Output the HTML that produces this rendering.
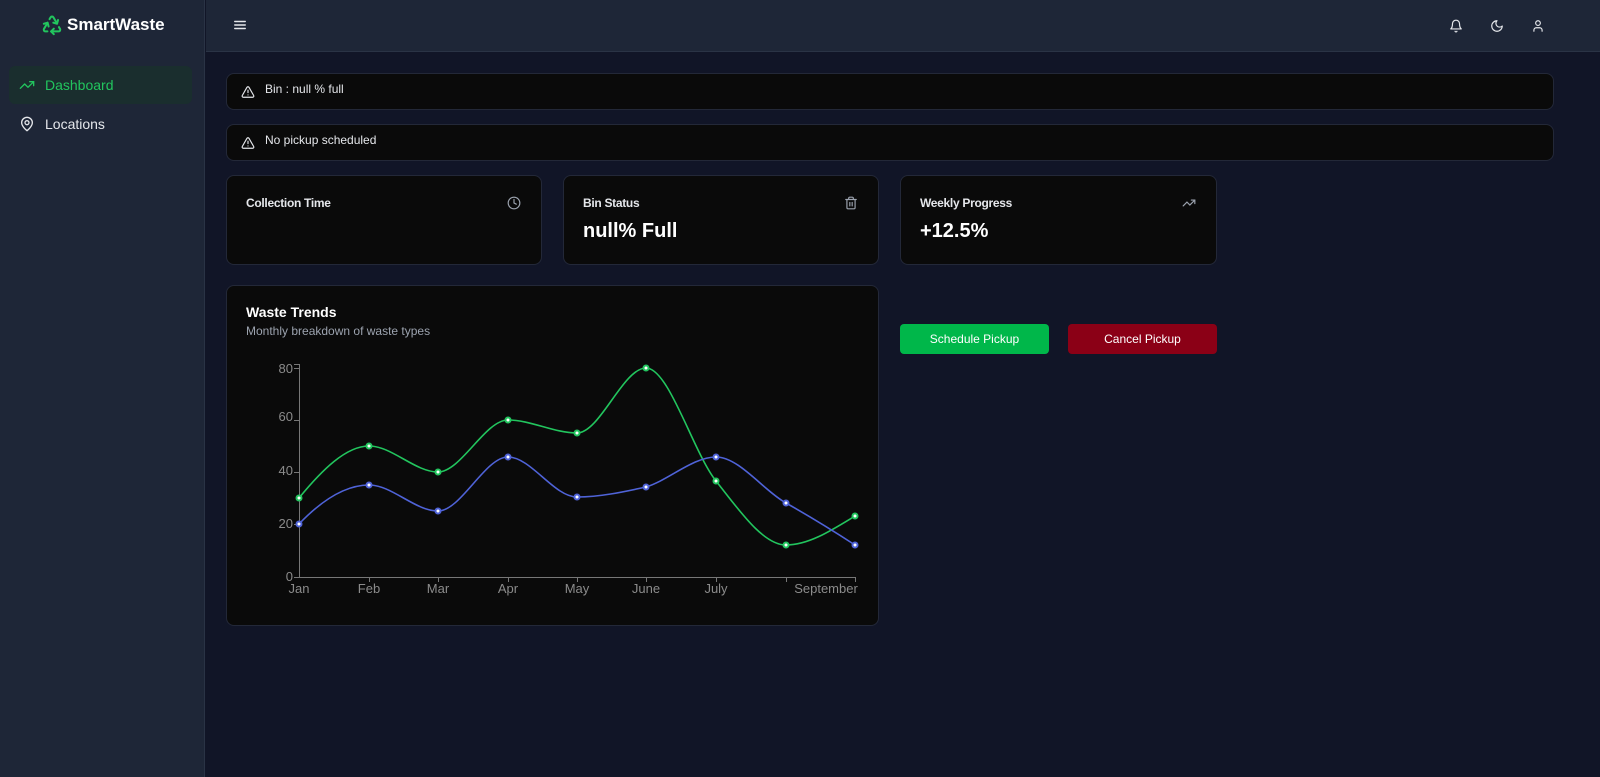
<!DOCTYPE html>
<html><head><meta charset="utf-8"><style>
*{box-sizing:border-box;margin:0;padding:0}
body{width:1600px;height:777px;background:#111527;font-family:"Liberation Sans",sans-serif;color:#e5e7eb;position:relative;overflow:hidden}
.side{position:absolute;left:0;top:0;width:205px;height:777px;background:#1e2637;border-right:1px solid #2a3345}
.top{position:absolute;left:206px;top:0;right:0;height:52px;background:#1e2637;border-bottom:1px solid #2a3345}
.logo{position:absolute;left:41px;top:14px;font-weight:bold;font-size:17px;color:#fff;display:flex;align-items:center;gap:2px}
.nav{position:absolute;left:9px;width:183px;height:38px;border-radius:6px;display:flex;align-items:center;padding-left:10px;font-size:14px;gap:10px}
.card{position:absolute;background:#0a0a0a;border:1px solid #232838;border-radius:8px}
.alert{left:226px;width:1328px;height:37px;font-size:12px;color:#e5e7eb;display:flex;align-items:center;padding-left:14px;gap:10px}
.ct{position:absolute;left:19px;top:20px;font-size:12px;font-weight:bold;color:#e5e7eb;letter-spacing:-0.3px}
.val{position:absolute;left:19px;top:44px;font-size:20px;font-weight:bold;color:#fff}
.ico{position:absolute;right:20px;top:20px}
.btn{position:absolute;top:324px;width:149px;height:30px;border-radius:4px;font-size:12px;color:#fff;display:flex;align-items:center;justify-content:center}
svg text{font-family:"Liberation Sans",sans-serif}
</style></head><body>
<div class="side">
 <div class="logo"><svg width="22" height="22" viewBox="0 0 24 24" fill="none" stroke="#22c55e" stroke-width="2.2" stroke-linecap="round" stroke-linejoin="round"><path d="M7 19H4.8a1.8 1.8 0 0 1-1.6-2.7L7.2 9.5"/><path d="M11 19h8.2a1.8 1.8 0 0 0 1.6-2.7l-1.2-2"/><path d="M14 16l-3 3 3 3"/><path d="M8.3 13.6 7.2 9.5 3.1 10.6"/><path d="m9.3 5.6 1.2-2A1.8 1.8 0 0 1 13.5 3.6l3.9 6.6"/><path d="m13.4 9.5 4.1 1.1 1.1-4.1"/></svg><span style="margin-left:2px">SmartWaste</span></div>
 <div class="nav" style="top:66px;background:#1a2e2e;color:#22c55e"><svg width="16" height="16" viewBox="0 0 24 24" fill="none" stroke="#22c55e" stroke-width="2" stroke-linecap="round" stroke-linejoin="round"><path d="M22 7l-8.5 8.5-5-5L2 17"/><path d="M16 7h6v6"/></svg>Dashboard</div>
 <div class="nav" style="top:105px;color:#e5e7eb"><svg width="16" height="16" viewBox="0 0 24 24" fill="none" stroke="#e5e7eb" stroke-width="2" stroke-linecap="round" stroke-linejoin="round"><path d="M20 10c0 6-8 12-8 12s-8-6-8-12a8 8 0 0 1 16 0Z"/><circle cx="12" cy="10" r="3"/></svg>Locations</div>
</div>
<div class="top">
 <svg style="position:absolute;left:27px;top:18px" width="14" height="14" viewBox="0 0 24 24" fill="none" stroke="#e5e7eb" stroke-width="2.4" stroke-linecap="round"><path d="M3 6h18M3 12h18M3 18h18"/></svg>
 <svg style="position:absolute;left:1243px;top:19px" width="14" height="14" viewBox="0 0 24 24" fill="none" stroke="#e5e7eb" stroke-width="2" stroke-linecap="round" stroke-linejoin="round"><path d="M6 8a6 6 0 0 1 12 0c0 7 3 9 3 9H3s3-2 3-9"/><path d="M10.3 21a1.9 1.9 0 0 0 3.4 0"/></svg>
 <svg style="position:absolute;left:1284px;top:19px" width="14" height="14" viewBox="0 0 24 24" fill="none" stroke="#e5e7eb" stroke-width="2" stroke-linecap="round" stroke-linejoin="round"><path d="M12 3a6 6 0 0 0 9 9 9 9 0 1 1-9-9Z"/></svg>
 <svg style="position:absolute;left:1325px;top:19px" width="14" height="14" viewBox="0 0 24 24" fill="none" stroke="#e5e7eb" stroke-width="2" stroke-linecap="round" stroke-linejoin="round"><circle cx="12" cy="7" r="4"/><path d="M19 21v-2a4 4 0 0 0-4-4H9a4 4 0 0 0-4 4v2"/></svg>
</div>
<div class="card alert" style="top:73px"><svg width="14" height="14" viewBox="0 0 24 24" fill="none" stroke="#e5e7eb" stroke-width="2" stroke-linecap="round" stroke-linejoin="round"><path d="m21.7 18-8-14a2 2 0 0 0-3.5 0l-8 14A2 2 0 0 0 4 21h16a2 2 0 0 0 1.7-3Z"/><path d="M12 9v4M12 17h.01"/></svg><span style="margin-top:-6px">Bin : null % full</span></div>
<div class="card alert" style="top:124px"><svg width="14" height="14" viewBox="0 0 24 24" fill="none" stroke="#e5e7eb" stroke-width="2" stroke-linecap="round" stroke-linejoin="round"><path d="m21.7 18-8-14a2 2 0 0 0-3.5 0l-8 14A2 2 0 0 0 4 21h16a2 2 0 0 0 1.7-3Z"/><path d="M12 9v4M12 17h.01"/></svg><span style="margin-top:-6px">No pickup scheduled</span></div>

<div class="card" style="left:226px;top:175px;width:316px;height:90px"><div class="ct">Collection Time</div><svg class="ico" width="14" height="14" viewBox="0 0 24 24" fill="none" stroke="#9ca3af" stroke-width="2" stroke-linecap="round"><circle cx="12" cy="12" r="10"/><path d="M12 6v6l4 2"/></svg></div>
<div class="card" style="left:563px;top:175px;width:316px;height:90px"><div class="ct">Bin Status</div><div class="val">null% Full</div><svg class="ico" width="14" height="14" viewBox="0 0 24 24" fill="none" stroke="#9ca3af" stroke-width="2" stroke-linecap="round"><path d="M3 6h18M19 6v14a2 2 0 0 1-2 2H7a2 2 0 0 1-2-2V6M8 6V4a2 2 0 0 1 2-2h4a2 2 0 0 1 2 2v2M10 11v6M14 11v6"/></svg></div>
<div class="card" style="left:900px;top:175px;width:317px;height:90px"><div class="ct">Weekly Progress</div><div class="val">+12.5%</div><svg class="ico" width="14" height="14" viewBox="0 0 24 24" fill="none" stroke="#9ca3af" stroke-width="2" stroke-linecap="round"><path d="M22 7l-8.5 8.5-5-5L2 17M16 7h6v6"/></svg></div>

<div class="card" style="left:226px;top:285px;width:653px;height:341px">
 <div style="position:absolute;left:19px;top:18px;font-size:14px;font-weight:bold;color:#fff">Waste Trends</div>
 <div style="position:absolute;left:19px;top:38px;font-size:12px;color:#9ca3af">Monthly breakdown of waste types</div>
</div>
<svg style="position:absolute;left:0;top:0" width="1600" height="777">
 <g stroke="#777" stroke-width="1" fill="none"><path d="M299.5 364v213.5H856M294 364.5h5.5M294 577.5h5M369.5 577v5M438.5 577v5M508.5 577v5M577.5 577v5M646.5 577v5M716.5 577v5M786.5 577v5M855.5 577v5M294 524.5h5M294 472.5h5M294 420.5h5M294 368.5h5"/></g>
 <g font-size="13" fill="#8b8b8b" text-anchor="end"><text x="293" y="373">80</text><text x="293" y="421">60</text><text x="293" y="475">40</text><text x="293" y="528">20</text><text x="293" y="581">0</text></g>
 <g font-size="13" fill="#8b8b8b" text-anchor="middle"><text x="299" y="593">Jan</text><text x="369" y="593">Feb</text><text x="438" y="593">Mar</text><text x="508" y="593">Apr</text><text x="577" y="593">May</text><text x="646" y="593">June</text><text x="716" y="593">July</text><text x="826" y="593">September</text></g>
 <path fill="none" stroke="#22c55e" stroke-width="1.6" d="M299 498C322 470 346 446 369 446C392 446 415 472 438 472C461 472 485 420 508 420C531 420 554 433 577 433C600 433 623 368 646 368C669 368 693 452 716 481C739 510 763 545 786 545C809 545 832 530 855 516"/>
 <path fill="none" stroke="#4f63d8" stroke-width="1.6" d="M299 524C322 500 346 485 369 485C392 485 415 511 438 511C461 511 485 457 508 457C531 457 554 497 577 497C600 497 623 492 646 487C669 480 693 457 716 457C739 457 763 490 786 503C809 516 832 530 855 545"/>
 <g fill="#fff" stroke="#22c55e" stroke-width="2"><circle cx="299" cy="498" r="2.5"/><circle cx="369" cy="446" r="2.5"/><circle cx="438" cy="472" r="2.5"/><circle cx="508" cy="420" r="2.5"/><circle cx="577" cy="433" r="2.5"/><circle cx="646" cy="368" r="2.5"/><circle cx="716" cy="481" r="2.5"/><circle cx="786" cy="545" r="2.5"/><circle cx="855" cy="516" r="2.5"/></g>
 <g fill="#fff" stroke="#4f63d8" stroke-width="2"><circle cx="299" cy="524" r="2.5"/><circle cx="369" cy="485" r="2.5"/><circle cx="438" cy="511" r="2.5"/><circle cx="508" cy="457" r="2.5"/><circle cx="577" cy="497" r="2.5"/><circle cx="646" cy="487" r="2.5"/><circle cx="716" cy="457" r="2.5"/><circle cx="786" cy="503" r="2.5"/><circle cx="855" cy="545" r="2.5"/></g>
</svg>
<div class="btn" style="left:900px;background:#00b74a">Schedule Pickup</div>
<div class="btn" style="left:1068px;background:#8b0016">Cancel Pickup</div>
</body></html>
